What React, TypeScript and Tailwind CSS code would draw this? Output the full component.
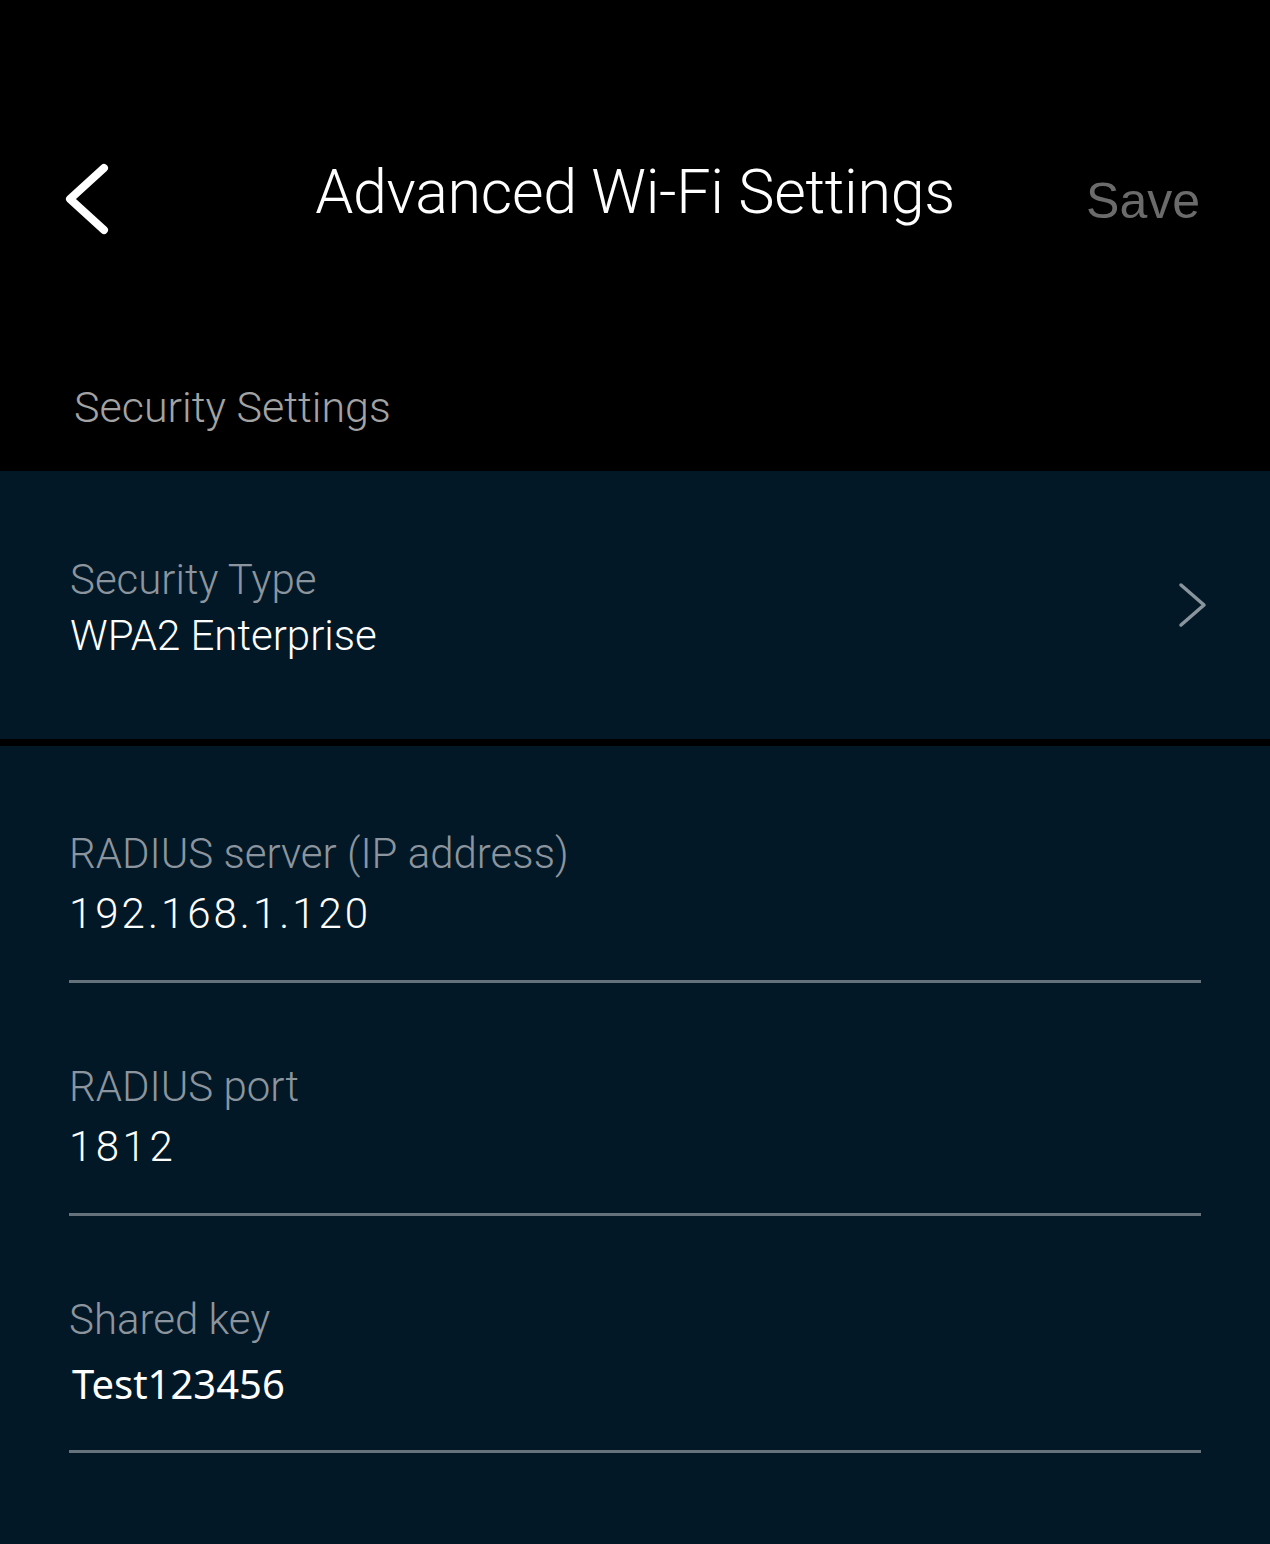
import { useState } from 'react';

type Field = { label: string; value: string; valueFont: string };

const fields: Field[] = [
  { label: 'RADIUS server (IP address)', value: '192.168.1.120', valueFont: 'font-light tracking-[3px] text-[42px]' },
  { label: 'RADIUS port', value: '1812', valueFont: 'font-light tracking-[3.5px] text-[42px]' },
  { label: 'Shared key', value: 'Test123456', valueFont: 'font-["Noto_Sans",sans-serif] text-[40px] pl-[3px] pt-[4px]' },
];

function BackIcon() {
  return (
    <svg width="50" height="72" viewBox="0 0 50 72" fill="none">
      <path d="M40 5 L6 36 L40 67" stroke="#fff" strokeWidth="8" strokeLinecap="round" strokeLinejoin="round" />
    </svg>
  );
}

function ChevronRight() {
  return (
    <svg width="30" height="46" viewBox="0 0 30 46" fill="none">
      <path d="M3 3 L26 23 L3 43" stroke="#8a949c" strokeWidth="3.5" strokeLinecap="round" strokeLinejoin="round" />
    </svg>
  );
}

export default function App() {
  const [saved] = useState(false);

  return (
    <div className="min-h-[1544px] bg-[#031827] font-['Roboto',sans-serif]">
      {/* header */}
      <div className="bg-black h-[471px] flex flex-col">
        <div className="mt-[150px] h-[90px] grid grid-cols-[1fr_auto_1fr] items-center">
          <button className="justify-self-start ml-[64px] mt-[8px]">
            <BackIcon />
          </button>
          <h1 className="text-[61px] font-light text-white tracking-[-0.3px] -mt-[4px]">
            Advanced Wi-Fi Settings
          </h1>
          <span
            className={`justify-self-end mr-[70px] mt-[12px] text-[50px] font-['Liberation_Sans',sans-serif] ${
              saved ? 'text-white' : 'text-[#6b6b6b]'
            }`}
          >
            Save
          </span>
        </div>
        <div className="mt-auto pb-[42px] pl-[74px] text-[43px] font-light text-[#a3a3a3] leading-none">
          Security Settings
        </div>
      </div>

      {/* security type */}
      <div className="h-[268px] flex items-center justify-between pl-[70px] pr-[62px]">
        <div className="flex flex-col gap-[10px] pt-[5px]">
          <span className="text-[42px] font-light text-[#8c959d] leading-[46px]">Security Type</span>
          <span className="text-[42px] font-light text-white leading-[46px]">WPA2 Enterprise</span>
        </div>
        <ChevronRight />
      </div>

      <div className="h-[7px] bg-black" />

      {/* radius fields */}
      <div className="pt-[84px] px-[69px]">
        {fields.map((f) => (
          <div key={f.label} className="mb-[80px]">
            <div className="text-[42px] font-light text-[#8c959d] leading-[48px]">{f.label}</div>
            <div className={`mt-[12px] text-white leading-[48px] ${f.valueFont}`}>{f.value}</div>
            <div className="mt-[42px] h-[3px] bg-[#65727b]" />
          </div>
        ))}
      </div>
    </div>
  );
}
